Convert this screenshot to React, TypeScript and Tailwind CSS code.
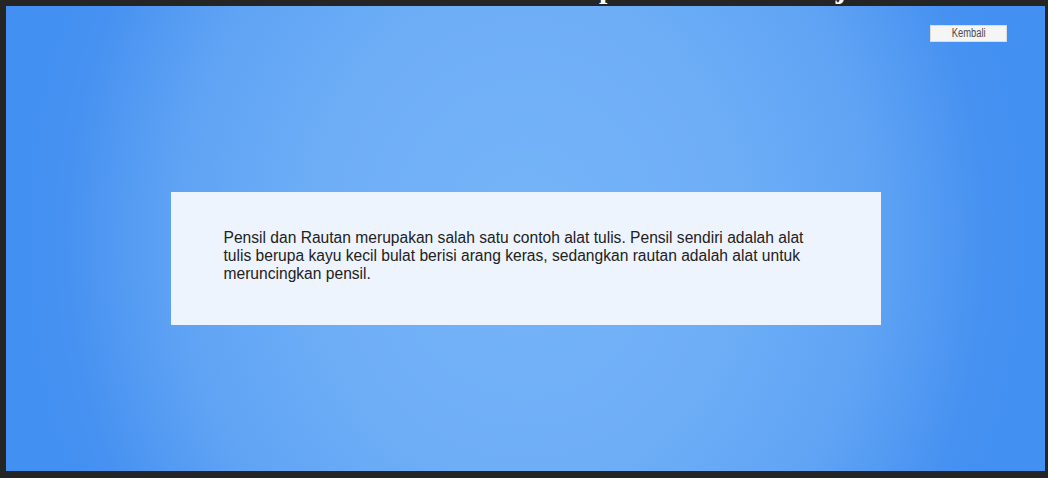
export default function App() {
  return (
    <div className="flex h-[478px] w-[1048px] flex-col overflow-hidden bg-[#252525] pb-[7px] pl-[6px] pr-[3px]">
      {/* judul yang terpotong di atas layar */}
      <div className="h-[6px] shrink-0 overflow-hidden">
        <div className="flex -translate-y-[30px] pl-[593px] font-['Liberation_Serif',serif] text-[30px] font-bold leading-[36px] text-white">
          <span>p</span>
          <span className="ml-[220px]">j</span>
        </div>
      </div>

      <main className="flex flex-1 flex-col bg-[radial-gradient(ellipse_48%_125%_at_50%_50%,#75b4f8_0%,#6eaef7_42%,#5fa3f4_70%,#4792f1_92%,#4290f1_100%)]">
        <div className="flex justify-end pr-[38px] pt-[19px]">
          <button className="flex h-[17px] w-[77px] items-center justify-center border border-[#dcdcdc] bg-[#f5f5f5] font-['Liberation_Sans',sans-serif] text-[12px] leading-[15px] text-[#4a4a4a]">
            <span className="inline-block scale-x-[0.78]">Kembali</span>
          </button>
        </div>

        <div className="mx-auto mt-[150px] h-[133px] w-[710px] bg-[#eef4fe] pl-[53px] pr-[60px] pt-[37px]">
          <p className="font-['Liberation_Sans',Arial,sans-serif] text-[15.6px] leading-[18px] text-[#222222]">
            Pensil dan Rautan merupakan salah satu contoh alat tulis. Pensil sendiri adalah alat tulis berupa kayu kecil bulat berisi arang keras, sedangkan rautan adalah alat untuk meruncingkan pensil.
          </p>
        </div>
      </main>
    </div>
  );
}
